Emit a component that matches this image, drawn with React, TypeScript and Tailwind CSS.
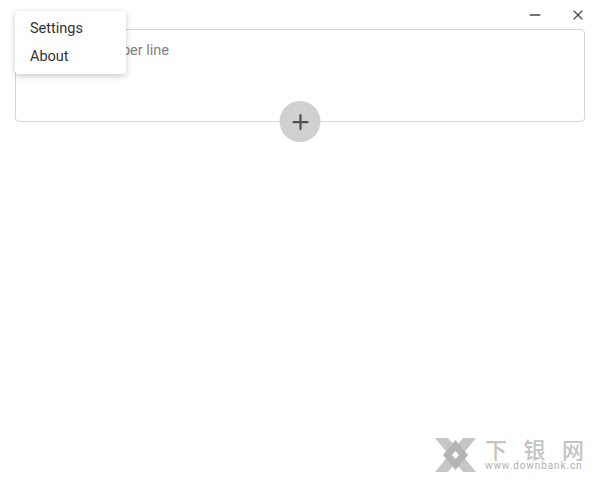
import { Minus, Plus, X } from 'lucide-react';

function WatermarkLogo() {
  return (
    <svg width="41" height="34" viewBox="0 0 41 34" className="mr-[9px] shrink-0">
      <polygon points="0,0 13,0 41,34 28,34" fill="#c6c6c6" />
      <polygon points="41,0 28,0 0,34 13,34" fill="#c6c6c6" />
      <polygon points="20.5,2 33,17 20.5,32 8,17" fill="#b4b4b4" />
      <polygon points="20.5,13 24,17 20.5,21 17,17" fill="#ffffff" />
    </svg>
  );
}

export default function App() {
  return (
    <div
      className="relative w-[600px] h-[480px] overflow-hidden bg-white text-[#333333]"
      style={{ fontFamily: 'Roboto, sans-serif' }}
    >
      {/* Window controls */}
      <div className="flex h-[29px] items-start justify-end pr-[14px] pt-[7px] gap-[27px] text-[#444444]">
        <Minus size={16} strokeWidth={2.25} />
        <X size={16} strokeWidth={1.75} />
      </div>

      {/* Input box */}
      <div className="relative mx-[15px] h-[93px] rounded-[4px] border border-[#d4d4d4]">
        <textarea
          className="h-full w-full resize-none bg-transparent px-[12px] py-[12px] text-[14.5px] leading-[18px] outline-none placeholder:text-[#808080]"
          placeholder="Add a number per line"
        />
        <button className="absolute left-1/2 bottom-[-21px] flex h-[41px] w-[41px] -translate-x-1/2 items-center justify-center rounded-full bg-[#d0d0d0] text-[#505050]">
          <Plus size={24} strokeWidth={2.25} />
        </button>
      </div>

      {/* Menu */}
      <div className="absolute left-[15px] top-[11px] flex w-[111px] flex-col rounded-[4px] bg-white pt-[4px] pb-[3px] text-[14.5px] shadow-[0_2px_6px_rgba(0,0,0,0.22)]">
        <div className="flex h-[27px] items-center px-[15px]">Settings</div>
        <div className="mt-[1px] flex h-[28px] items-center px-[15px]">About</div>
      </div>

      {/* Watermark */}
      <div className="absolute left-[435px] top-[438px] flex items-center">
        <WatermarkLogo />
        <div className="flex flex-col">
          <div
            className="flex w-[99px] justify-between text-[22px] font-medium leading-[20px] text-[#c4c4c4]"
            style={{ fontFamily: '"Noto Sans CJK SC", sans-serif' }}
          >
            <span>下</span>
            <span>银</span>
            <span>网</span>
          </div>
          <div className="mt-[2px] text-[10px] leading-[12px] tracking-[0.9px] text-[#b0b0b0]">www.downbank.cn</div>
        </div>
      </div>
    </div>
  );
}
